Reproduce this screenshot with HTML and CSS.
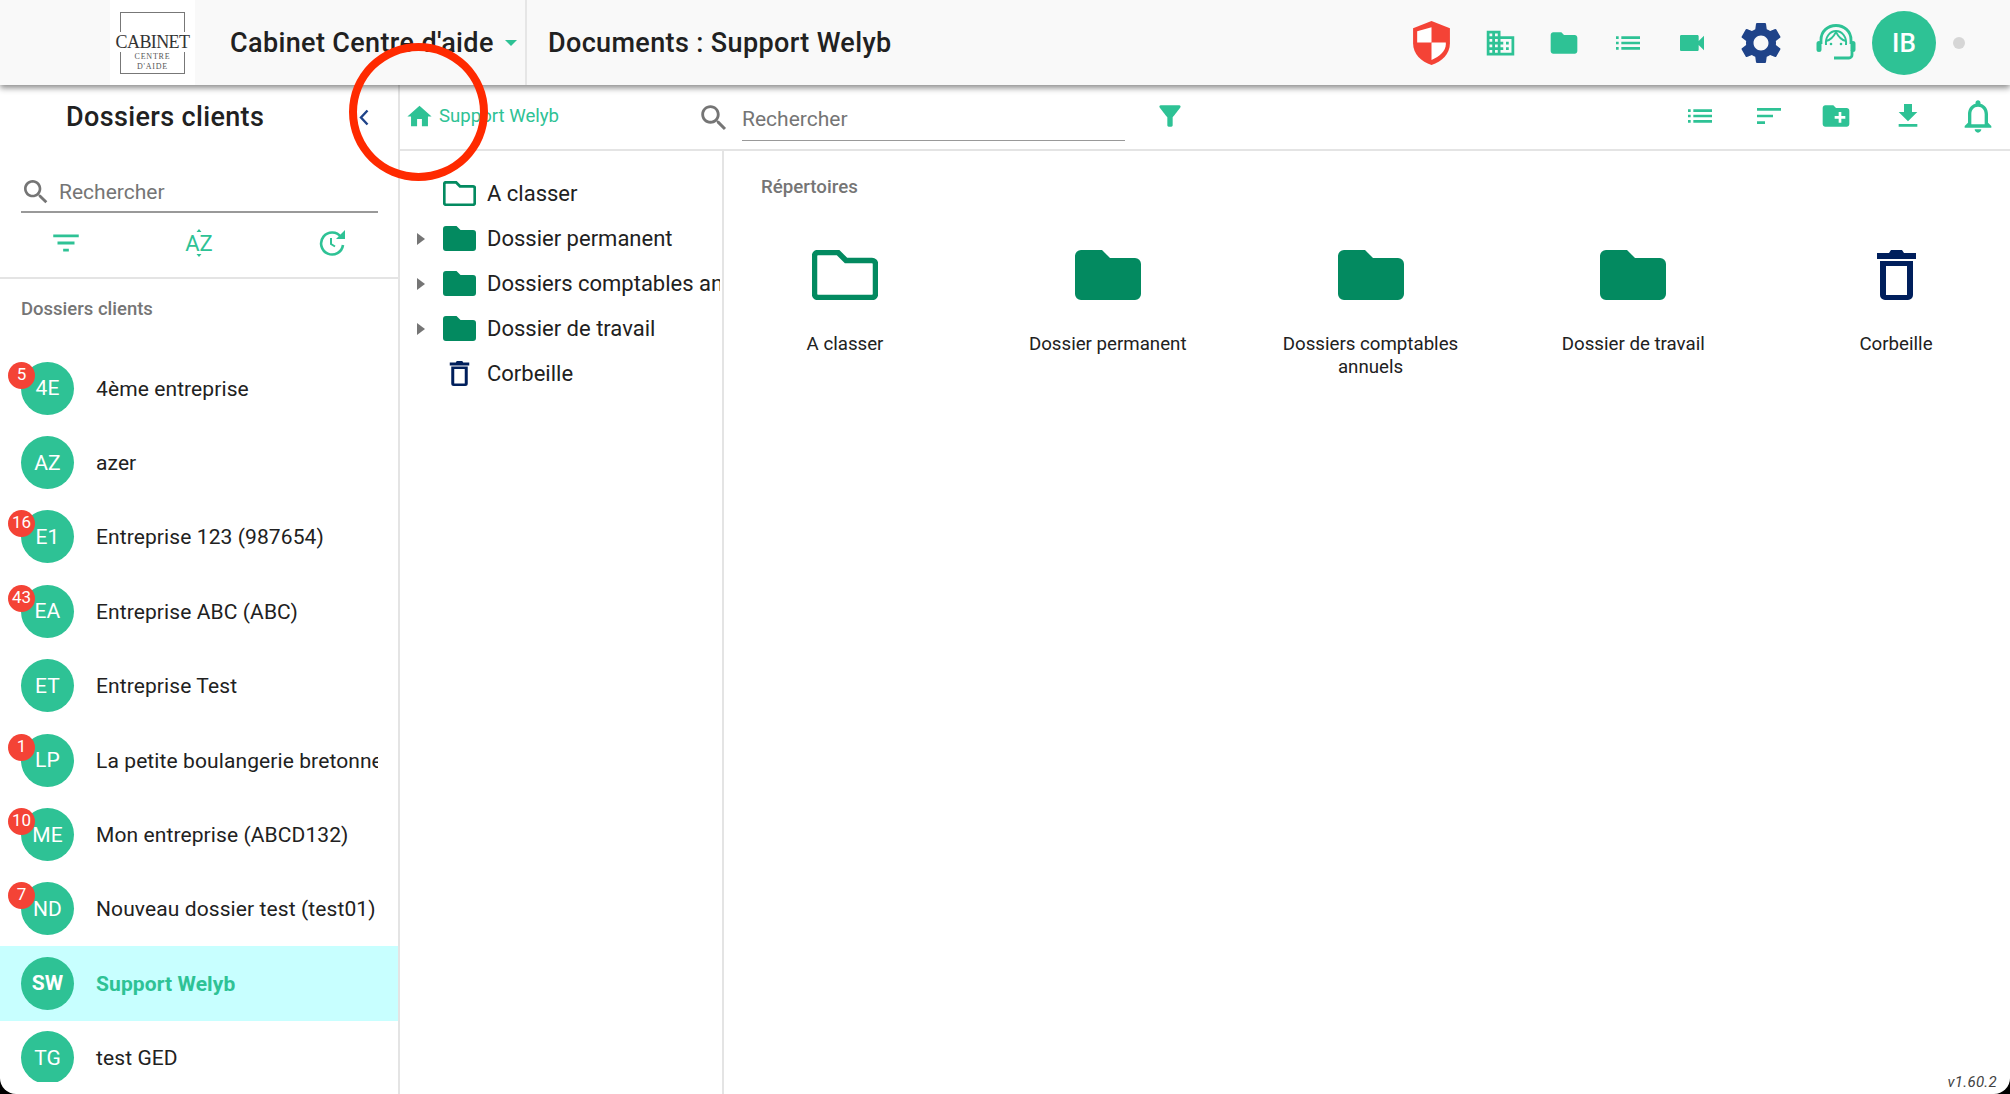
FILE: index.html
```html
<!DOCTYPE html>
<html lang="fr">
<head>
  <meta charset="UTF-8" />
  <meta name="viewport" content="width=device-width, initial-scale=1.0" />
  <title>Documents : Support Welyb</title>
  <link rel="stylesheet" href="styles.css">
</head>
<body>
  <svg class="sprite" xmlns="http://www.w3.org/2000/svg">
    <symbol id="i-search" viewBox="0 0 24 24"><path d="M15.5 14h-.79l-.28-.27C15.41 12.59 16 11.11 16 9.5 16 5.91 13.09 3 9.5 3S3 5.91 3 9.5 5.91 16 9.5 16c1.61 0 3.09-.59 4.23-1.57l.27.28v.79l5 4.99L20.49 19l-4.99-5zm-6 0C7.01 14 5 11.99 5 9.5S7.01 5 9.5 5 14 7.01 14 9.5 11.99 14 9.5 14z"/></symbol>
    <symbol id="i-list" viewBox="0 0 24 24"><path d="M3 13h2v-2H3v2zm0 4h2v-2H3v2zm0-8h2V7H3v2zm4 4h14v-2H7v2zm0 4h14v-2H7v2zM7 7v2h14V7H7z"/></symbol>
    <symbol id="i-folder" viewBox="0 0 24 24"><path d="M10 4H4c-1.1 0-1.99.9-1.99 2L2 18c0 1.1.9 2 2 2h16c1.1 0 2-.9 2-2V8c0-1.1-.9-2-2-2h-8l-2-2z"/></symbol>
    <symbol id="i-bigfolder" viewBox="0 0 66 50"><path d="M6 0H27L35 8H60a6 6 0 0 1 6 6V44a6 6 0 0 1-6 6H6a6 6 0 0 1-6-6V6a6 6 0 0 1 6-6z"/></symbol>
    <symbol id="i-bigfolder-open" viewBox="0 0 66 50"><path d="M6 2.5H26L34 10.5H60a3.5 3.5 0 0 1 3.5 3.5V44a3.5 3.5 0 0 1-3.5 3.5H6A3.5 3.5 0 0 1 2.5 44V6A3.5 3.5 0 0 1 6 2.5z" fill="none" stroke="currentColor" stroke-width="5.5"/></symbol>
    <symbol id="i-trash" viewBox="0 0 39 50"><path d="M14 0h11l2 3h12v6H0V3h12zM3 11h33v34a5 5 0 0 1-5 5H8a5 5 0 0 1-5-5zM9 16v29h21V16z" fill-rule="evenodd"/></symbol>
  </svg>

  <div class="app">
    <header class="topbar">
      <div class="logo">
        <div class="logo-box">
          <span class="logo-name">CABINET</span>
          <span class="logo-sub">CENTRE</span>
          <span class="logo-sub">D'AIDE</span>
        </div>
      </div>
      <div class="cabinet">
        <span class="topbar-title">Cabinet Centre d'aide</span>
        <span class="caret"></span>
      </div>
      <div class="topbar-title page-title">Documents : Support Welyb</div>
      <nav class="topbar-icons">
        <span class="hd-btn wide">
          <svg class="shield" viewBox="0 0 36 43">
            <path d="M18 0L36 7V22C36 32 28 40 18 43C8 40 0 32 0 22V7z" fill="#f44336"/>
            <path d="M18 6V21H4V10z" fill="#fff"/>
            <path d="M18 21H32V23C32 29 26 35 18 38z" fill="#fff"/>
          </svg>
        </span>
        <span class="hd-btn">
          <svg class="ic green" width="33" height="34" viewBox="0 0 24 24"><path d="M12 7V3H2v18h20V7H12zM6 19H4v-2h2v2zm0-4H4v-2h2v2zm0-4H4V9h2v2zm0-4H4V5h2v2zm4 12H8v-2h2v2zm0-4H8v-2h2v2zm0-4H8V9h2v2zm0-4H8V5h2v2zm10 12h-8v-2h2v-2h-2v-2h2v-2h-2V9h8v10zm-2-8h-2v2h2v-2zm0 4h-2v2h2v-2z"/></svg>
        </span>
        <span class="hd-btn"><svg class="ic green" width="32" height="32"><use href="#i-folder"/></svg></span>
        <span class="hd-btn"><svg class="ic green" width="32" height="32"><use href="#i-list"/></svg></span>
        <span class="hd-btn">
          <svg class="ic green" width="32" height="32" viewBox="0 0 24 24"><path d="M17 10.5V7c0-.55-.45-1-1-1H4c-.55 0-1 .45-1 1v10c0 .55.45 1 1 1h12c.55 0 1-.45 1-1v-3.5l4 4v-11l-4 4z"/></svg>
        </span>
        <span class="hd-btn wide">
          <svg class="ic navy" width="50" height="50" viewBox="0 0 24 24"><path d="M19.14 12.94c.04-.3.06-.61.06-.94 0-.32-.02-.64-.07-.94l2.03-1.58c.18-.14.23-.41.12-.61l-1.92-3.32c-.12-.22-.37-.29-.59-.22l-2.39.96c-.5-.38-1.03-.7-1.62-.94l-.36-2.54c-.04-.24-.24-.41-.48-.41h-3.84c-.24 0-.43.17-.47.41l-.36 2.54c-.59.24-1.13.57-1.62.94l-2.39-.96c-.22-.08-.47 0-.59.22L2.74 8.87c-.12.21-.08.47.12.61l2.03 1.58c-.05.3-.09.63-.09.94s.02.64.07.94l-2.03 1.58c-.18.14-.23.41-.12.61l1.92 3.32c.12.22.37.29.59.22l2.39-.96c.5.38 1.03.7 1.62.94l.36 2.54c.05.24.24.41.48.41h3.84c.24 0 .44-.17.47-.41l.36-2.54c.59-.24 1.13-.56 1.62-.94l2.39.96c.22.08.47 0 .59-.22l1.92-3.32c.12-.22.07-.47-.12-.61l-2.01-1.58zM12 15.6c-1.98 0-3.6-1.62-3.6-3.6s1.62-3.6 3.6-3.6 3.6 1.62 3.6 3.6-1.62 3.6-3.6 3.6z"/></svg>
        </span>
        <span class="hd-btn support">
          <svg width="40" height="37" viewBox="0 0 40 37" fill="none" stroke="#2ec295" stroke-width="2.8">
            <path d="M5 20V16C5 7 12 1.500 20 1.500S35 7 35 16V20"/>
            <path d="M10 21C9 13 14 7 20 7C26 7 31 13 30 21" stroke-width="2"/>
            <path d="M10 17C15 16 18 12 20 8C22 12 25 16 30 17" stroke-width="1.800"/>
            <path d="M36 26V31a3 3 0 0 1-3 3H18"/>
            <rect x="1.500" y="18" width="3" height="9" rx="1.500" fill="#2ec295" stroke-width="2"/>
            <rect x="35.500" y="18" width="3" height="9" rx="1.500" fill="#2ec295" stroke-width="2"/>
            <circle cx="15" cy="20" r="1.300" fill="#2ec295" stroke="none"/>
            <circle cx="25" cy="20" r="1.300" fill="#2ec295" stroke="none"/>
          </svg>
        </span>
        <span class="avatar avatar-me">IB</span>
        <span class="status-dot"></span>
      </nav>
    </header>

    <div class="main">
      <aside class="clients">
        <div class="clients-head">
          <h1>Dossiers clients</h1>
          <svg class="collapse" width="10" height="17" viewBox="0 0 10 17"><path d="M8.5 1.500L2 8.500l6.500 7" fill="none" stroke="#1f4389" stroke-width="2.400"/></svg>
        </div>
        <div class="clients-search">
          <svg class="ic grey" width="32" height="32"><use href="#i-search"/></svg>
          <input type="text" placeholder="Rechercher" />
        </div>
        <div class="sort-row">
          <svg class="ic green" width="34" height="34" viewBox="0 0 24 24"><path d="M10 18h4v-2h-4v2zM3 6v2h18V6H3zm3 7h12v-2H6v2z"/></svg>
          <svg width="30" height="30" viewBox="0 0 30 30">
            <text class="az" x="15" y="23" text-anchor="middle">AZ</text>
            <path d="M15 1l-2.500 3h5zM15 29l-2.500-3h5z" fill="#2ec295"/>
          </svg>
          <svg width="28" height="26" viewBox="0 0 28 26" fill="none" stroke="#2ec295" stroke-width="2.600">
            <path d="M23 7A11 11 0 1 0 25 15"/>
            <path d="M13 8V14L17 16.500" stroke-width="2"/>
            <path d="M18 9H27V0z" fill="#2ec295" stroke="none"/>
          </svg>
        </div>
        <div class="section-label">Dossiers clients</div>
        <ul class="client-list">
          <li class="client"><span class="avatar">4E<b class="badge">5</b></span>4ème entreprise</li>
          <li class="client"><span class="avatar">AZ</span>azer</li>
          <li class="client"><span class="avatar">E1<b class="badge">16</b></span>Entreprise 123 (987654)</li>
          <li class="client"><span class="avatar">EA<b class="badge">43</b></span>Entreprise ABC (ABC)</li>
          <li class="client"><span class="avatar">ET</span>Entreprise Test</li>
          <li class="client"><span class="avatar">LP<b class="badge">1</b></span><span class="client-name">La petite boulangerie bretonne</span></li>
          <li class="client"><span class="avatar">ME<b class="badge">10</b></span>Mon entreprise (ABCD132)</li>
          <li class="client"><span class="avatar">ND<b class="badge">7</b></span>Nouveau dossier test (test01)</li>
          <li class="client active"><span class="avatar">SW</span>Support Welyb</li>
          <li class="client"><span class="avatar">TG</span>test GED</li>
        </ul>
      </aside>

      <section class="docs">
        <div class="toolbar">
          <div class="crumb">
            <svg class="ic green" width="29" height="29" viewBox="0 0 24 24"><path d="M10 20v-6h4v6h5v-8h3L12 3 2 12h3v8z"/></svg>
            <span>Support Welyb</span>
          </div>
          <svg class="ic grey doc-search-icon" width="34" height="34"><use href="#i-search"/></svg>
          <input class="doc-search" type="text" placeholder="Rechercher" />
          <svg class="ic green funnel" width="32" height="32" viewBox="0 0 24 24"><path d="M4.250 5.610C6.270 8.200 10 13 10 13v6c0 .55.45 1 1 1h2c.55 0 1-.45 1-1v-6s3.720-4.800 5.740-7.390c.51-.66.04-1.610-.79-1.610H5.040c-.83 0-1.300.95-.79 1.610z"/></svg>
          <div class="actions">
            <svg class="ic green" width="32" height="32"><use href="#i-list"/></svg>
            <svg class="ic green" width="32" height="32" viewBox="0 0 24 24"><path d="M3 18h6v-2H3v2zM3 6v2h18V6H3zm0 7h12v-2H3v2z"/></svg>
            <svg class="ic green add-folder" width="32" height="32" viewBox="0 0 24 24"><path d="M20 6h-8l-2-2H4c-1.110 0-1.990.89-1.990 2L2 18c0 1.110.89 2 2 2h16c1.110 0 2-.89 2-2V8c0-1.110-.89-2-2-2zm-1 8h-3v3h-2v-3h-3v-2h3V9h2v3h3v2z"/></svg>
            <svg class="ic green" width="32" height="32" viewBox="0 0 24 24"><path d="M19 9h-4V3H9v6H5l7 7 7-7zM5 18v2h14v-2H5z"/></svg>
            <svg class="ic green bell" width="40" height="40" viewBox="0 0 24 24"><path d="M12 22c1.100 0 2-.9 2-2h-4c0 1.100.9 2 2 2zm6-6v-5c0-3.070-1.630-5.640-4.500-6.320V4c0-.83-.67-1.500-1.500-1.500s-1.500.67-1.500 1.500v.68C7.640 5.360 6 7.920 6 11v5l-2 2v1h16v-1l-2-2zm-2 1H8v-6c0-2.480 1.510-4.500 4-4.500s4 2.020 4 4.500v6z"/></svg>
          </div>
        </div>

        <div class="docs-body">
          <ul class="tree">
            <li class="tree-row"><span class="arrow"></span><svg class="ic teal" width="33" height="25"><use href="#i-bigfolder-open"/></svg><span>A classer</span></li>
            <li class="tree-row"><span class="arrow"><svg width="8" height="12" viewBox="0 0 8 12"><path d="M0 0l8 6-8 6z" fill="#757575"/></svg></span><svg class="ic teal" width="33" height="25"><use href="#i-bigfolder"/></svg><span>Dossier permanent</span></li>
            <li class="tree-row"><span class="arrow"><svg width="8" height="12" viewBox="0 0 8 12"><path d="M0 0l8 6-8 6z" fill="#757575"/></svg></span><svg class="ic teal" width="33" height="25"><use href="#i-bigfolder"/></svg><span>Dossiers comptables annuels</span></li>
            <li class="tree-row"><span class="arrow"><svg width="8" height="12" viewBox="0 0 8 12"><path d="M0 0l8 6-8 6z" fill="#757575"/></svg></span><svg class="ic teal" width="33" height="25"><use href="#i-bigfolder"/></svg><span>Dossier de travail</span></li>
            <li class="tree-row"><span class="arrow"></span><svg class="ic dark" width="33" height="25"><use href="#i-trash"/></svg><span>Corbeille</span></li>
          </ul>

          <div class="folders">
            <h2>Répertoires</h2>
            <div class="folder-grid">
              <div class="folder"><svg class="ic teal" width="66" height="50"><use href="#i-bigfolder-open"/></svg><span>A classer</span></div>
              <div class="folder"><svg class="ic teal" width="66" height="50"><use href="#i-bigfolder"/></svg><span>Dossier permanent</span></div>
              <div class="folder"><svg class="ic teal" width="66" height="50"><use href="#i-bigfolder"/></svg><span>Dossiers comptables annuels</span></div>
              <div class="folder"><svg class="ic teal" width="66" height="50"><use href="#i-bigfolder"/></svg><span>Dossier de travail</span></div>
              <div class="folder"><svg class="ic dark" width="39" height="50"><use href="#i-trash"/></svg><span>Corbeille</span></div>
            </div>
          </div>
        </div>
      </section>
    </div>

    <span class="version">v1.60.2</span>
    <div class="marker"></div>
  </div>
</body>
</html>
```

FILE: styles.css
```css
* {
  box-sizing: border-box;
}
html, body {
  margin: 0;
  height: 100%;
  background-color: #000;
}
body {
  font-family: Roboto, "Liberation Sans", sans-serif;
  color: #212121;
  overflow: hidden;
}
ul {
  list-style: none;
  margin: 0;
  padding: 0;
}
.sprite {
  display: none;
}
.ic {
  fill: currentColor;
  flex-shrink: 0;
}
.green { color: #2ec295; }
.grey { color: #757575; }
.navy { color: #1f4389; }
.teal { color: #038a60; }
.dark { color: #001f5c; }

.app {
  position: relative;
  width: 2010px;
  height: 1094px;
  display: flex;
  flex-direction: column;
  background-color: #fff;
  border-radius: 0 0 16px 16px;
  overflow: hidden;
}

/* top bar */
.topbar {
  position: relative;
  z-index: 2;
  height: 85px;
  flex-shrink: 0;
  display: flex;
  align-items: center;
  padding-left: 110px;
  background-color: #f9f9f9;
  box-shadow: 0 3px 6px rgba(0, 0, 0, 0.45);
}
.logo {
  width: 85px;
  height: 85px;
  flex-shrink: 0;
  background-color: #fff;
  display: flex;
  align-items: center;
  justify-content: center;
}
.logo-box {
  width: 65px;
  height: 62px;
  border: 1px solid #777;
  display: flex;
  flex-direction: column;
  align-items: center;
  padding-top: 19px;
  font-family: "Liberation Serif", serif;
  color: #333;
}
.logo-name {
  font-size: 18px;
  line-height: 20px;
  letter-spacing: -0.6px;
  background-color: #fff;
  padding: 0 1px;
  white-space: nowrap;
}
.logo-sub {
  font-size: 8px;
  line-height: 10px;
  letter-spacing: 0.8px;
  color: #555;
}
.cabinet {
  width: 332px;
  height: 100%;
  padding-left: 35px;
  display: flex;
  align-items: center;
  border-right: 2px solid #e6e6e6;
}
.topbar-title {
  font-size: 27px;
  font-weight: 500;
  letter-spacing: 0.36px;
  white-space: nowrap;
}
.page-title {
  margin-left: 21px;
}
.caret {
  margin-left: 11px;
  border-left: 6.5px solid transparent;
  border-right: 6.5px solid transparent;
  border-top: 6px solid #2ec295;
}
.topbar-icons {
  margin-left: auto;
  display: flex;
  align-items: center;
  padding-right: 45px;
}
.hd-btn {
  width: 64px;
  display: flex;
  justify-content: center;
}
.hd-btn.wide {
  width: 74px;
}
.hd-btn.support {
  width: 76px;
  margin-right: -2px;
}
.shield {
  width: 37px;
  height: 44px;
}
.avatar {
  position: relative;
  flex-shrink: 0;
  width: 53px;
  height: 53px;
  border-radius: 50%;
  background-color: #2ec295;
  color: #fff;
  font-size: 21px;
  display: flex;
  align-items: center;
  justify-content: center;
}
.avatar-me {
  width: 64px;
  height: 64px;
  font-size: 26px;
  font-weight: 500;
}
.status-dot {
  width: 12px;
  height: 12px;
  margin-left: 17px;
  border-radius: 50%;
  background-color: #d6d6d6;
}

/* layout */
.main {
  flex: 1;
  min-height: 0;
  display: flex;
}

/* clients column */
.clients {
  width: 400px;
  flex-shrink: 0;
  display: flex;
  flex-direction: column;
  border-right: 2px solid #e4e4e4;
}
.clients-head {
  height: 64px;
  flex-shrink: 0;
  display: flex;
  align-items: center;
  padding: 0 29px 0 66px;
}
.clients-head h1 {
  margin: 0;
  font-size: 27px;
  font-weight: 500;
  letter-spacing: 0.36px;
}
.collapse {
  margin-left: auto;
}
.clients-search {
  height: 45px;
  flex-shrink: 0;
  margin: 19px 20px 0 21px;
  padding-top: 4px;
  display: flex;
  align-items: center;
  border-bottom: 2px solid #999;
}
.clients-search .ic {
  margin-left: -1px;
}
input {
  border: none;
  outline: none;
  background: transparent;
  font-family: inherit;
  font-size: 21px;
  color: #212121;
  min-width: 0;
}
input::placeholder {
  color: #757575;
  opacity: 1;
}
.clients-search input {
  flex: 1;
  margin-left: 7px;
  padding: 0;
}
.sort-row {
  height: 66px;
  flex-shrink: 0;
  display: grid;
  grid-template-columns: repeat(3, 1fr);
  justify-items: center;
  align-items: center;
  padding-bottom: 4px;
  border-bottom: 2px solid #e4e4e4;
}
.az {
  font-family: Roboto, sans-serif;
  font-size: 22px;
  fill: #2ec295;
}
.section-label {
  flex-shrink: 0;
  padding: 20px 0 32px 21px;
  font-size: 18.5px;
  line-height: 20px;
  font-weight: 500;
  color: #757575;
}
.client-list {
  flex: 1;
  min-height: 0;
  margin-bottom: 12px;
  overflow: hidden;
}
.client {
  height: 74.4px;
  display: flex;
  align-items: center;
  gap: 22px;
  padding: 1px 0 0 21px;
  font-size: 21px;
  letter-spacing: 0.1px;
  white-space: nowrap;
}
.client .avatar {
  margin-top: -1px;
}
.client-name {
  overflow: hidden;
  width: 282px;
}
.client.active {
  background-color: #c8ffff;
  color: #2ec295;
  font-weight: 700;
}
.badge {
  position: absolute;
  top: 0;
  left: -13px;
  width: 27px;
  height: 27px;
  border-radius: 50%;
  background-color: #f44336;
  color: #fff;
  font-size: 17px;
  font-weight: 400;
  line-height: 25px;
  letter-spacing: 0;
  text-align: center;
}

/* documents */
.docs {
  flex: 1;
  min-width: 0;
  display: flex;
  flex-direction: column;
}
.toolbar {
  height: 66px;
  flex-shrink: 0;
  display: flex;
  align-items: center;
  padding-bottom: 2px;
  border-bottom: 2px solid #e4e4e4;
}
.crumb {
  width: 297px;
  flex-shrink: 0;
  display: flex;
  align-items: center;
  gap: 5px;
  padding-left: 5px;
  font-size: 18.6px;
  color: #2ec295;
}
.doc-search-icon {
  margin-top: 4px;
}
.doc-search {
  width: 383px;
  height: 42px;
  margin: 0 0 6px 11px;
  padding: 0 0 2px;
  align-self: flex-end;
  border-bottom: 1px solid #999;
}
.funnel {
  margin-left: 29px;
}
.actions {
  margin-left: auto;
  padding-right: 12px;
  display: flex;
  align-items: center;
  gap: 37px;
}
.add-folder {
  margin: 0 3px 0 -2px;
}
.bell {
  margin-left: -3px;
}
.docs-body {
  flex: 1;
  min-height: 0;
  display: flex;
}
.tree {
  width: 324px;
  flex-shrink: 0;
  padding: 20px 2px 0 0;
  border-right: 2px solid #e4e4e4;
}
.tree-row {
  height: 45.1px;
  display: flex;
  align-items: center;
  padding-left: 17px;
  font-size: 22px;
  white-space: nowrap;
  overflow: hidden;
}
.tree-row .ic {
  margin-right: 11px;
}
.arrow {
  width: 26px;
  flex-shrink: 0;
  display: flex;
}
.folders {
  flex: 1;
  min-width: 0;
  padding: 26px 0 0 37px;
}
.folders h2 {
  margin: 0;
  font-size: 18.7px;
  line-height: 20px;
  font-weight: 500;
  color: #757575;
}
.folder-grid {
  margin: 53px 0 0 -16px;
  display: grid;
  grid-template-columns: repeat(5, 200px);
  column-gap: 62.75px;
}
.folder {
  display: flex;
  flex-direction: column;
  align-items: center;
  text-align: center;
  font-size: 18.7px;
  line-height: 23px;
}
.folder .ic {
  margin-bottom: 33px;
}

/* overlays */
.version {
  position: absolute;
  right: 13px;
  bottom: 3px;
  font-size: 15px;
  font-style: italic;
  letter-spacing: 0.3px;
  color: #424242;
}
.marker {
  position: absolute;
  z-index: 3;
  left: 349px;
  top: 43px;
  width: 139px;
  height: 138px;
  border: 8px solid #ff2a00;
  border-radius: 50%;
}
```
